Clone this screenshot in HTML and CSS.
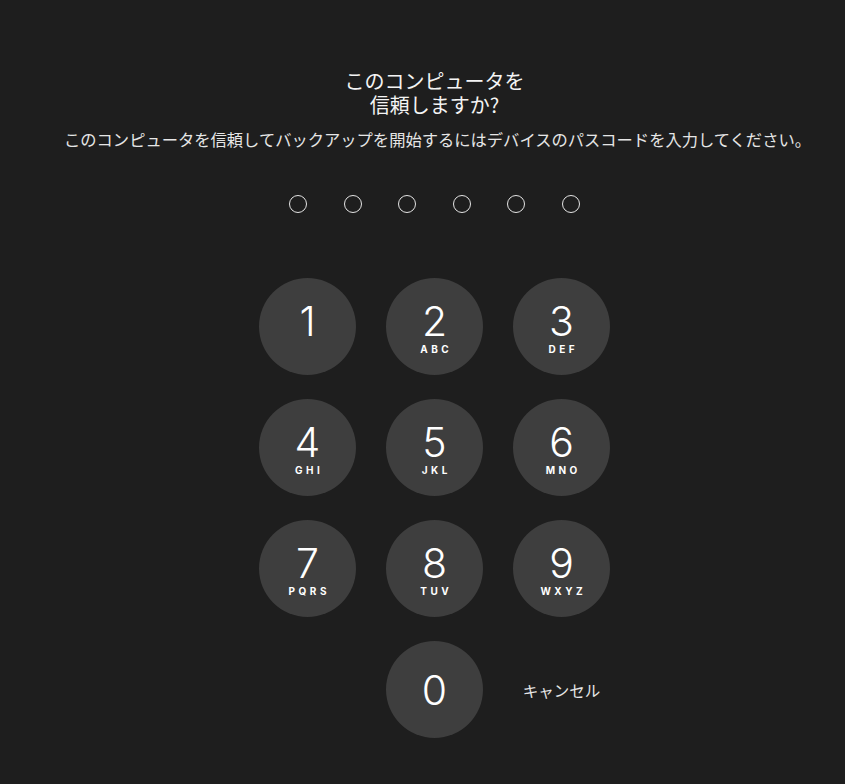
FILE: index.html
```html
<!DOCTYPE html>
<html lang="ja">
<head>
<meta charset="utf-8">
<link rel="stylesheet" href="styles.css">
</head>
<body>
<main class="page">
  <h1 class="title">このコンピュータを<br>信頼しますか?</h1>
  <p class="subtitle">このコンピュータを信頼してバックアップを開始するにはデバイスのパスコードを入力してください。</p>
  <div class="dots">
    <span class="dot"></span><span class="dot"></span><span class="dot"></span>
    <span class="dot"></span><span class="dot"></span><span class="dot"></span>
  </div>
  <div class="keypad">
    <div class="key"><span class="digit">1</span><span class="letters"></span></div>
    <div class="key"><span class="digit">2</span><span class="letters">ABC</span></div>
    <div class="key"><span class="digit">3</span><span class="letters">DEF</span></div>
    <div class="key"><span class="digit">4</span><span class="letters">GHI</span></div>
    <div class="key"><span class="digit">5</span><span class="letters">JKL</span></div>
    <div class="key"><span class="digit">6</span><span class="letters">MNO</span></div>
    <div class="key"><span class="digit">7</span><span class="letters">PQRS</span></div>
    <div class="key"><span class="digit">8</span><span class="letters">TUV</span></div>
    <div class="key"><span class="digit">9</span><span class="letters">WXYZ</span></div>
    <div class="key key-zero"><span class="digit">0</span></div>
    <div class="cancel">キャンセル</div>
  </div>
</main>
</body>
</html>
```
FILE: styles.css
```css
html, body {
  margin: 0;
  padding: 0;
  background: #1e1e1e;
}
body {
  width: 845px;
  height: 784px;
  overflow: hidden;
  font-family: "Noto Sans CJK JP", "Noto Sans", sans-serif;
  color: #f2f2f2;
}
.page {
  padding: 69px 0 0 24px;
  display: flex;
  flex-direction: column;
  align-items: center;
}
.title {
  margin: 0;
  font-size: 20px;
  line-height: 24px;
  font-weight: 400;
  text-align: center;
  color: #f4f4f4;
}
.subtitle {
  margin: 11px 0 0;
  padding-left: 6px;
  font-size: 16.3px;
  line-height: 22px;
  color: #e6e6e6;
  white-space: nowrap;
}
.dots {
  margin-top: 45px;
  display: flex;
  gap: 36.5px;
}
.dot {
  width: 16px;
  height: 16px;
  border: 1.6px solid #e4e4e4;
  border-radius: 50%;
}
.keypad {
  margin-top: 65px;
  display: grid;
  grid-template-columns: repeat(3, 97px);
  grid-auto-rows: 97px;
  column-gap: 30px;
  row-gap: 24px;
}
.key {
  width: 97px;
  height: 97px;
  border-radius: 50%;
  background: #3e3e3e;
  display: flex;
  flex-direction: column;
  align-items: center;
  justify-content: center;
  color: #ffffff;
}
.digit {
  font-family: Inter, "Liberation Sans", sans-serif;
  font-size: 41px;
  line-height: 44px;
  font-weight: 300;
}
.letters {
  font-family: Inter, "Liberation Sans", sans-serif;
  font-size: 10px;
  line-height: 12px;
  height: 12px;
  font-weight: 700;
  letter-spacing: 3.5px;
  padding-left: 3.5px;
}
.key-zero {
  grid-column: 2;
}
.cancel {
  display: flex;
  align-items: center;
  justify-content: center;
  font-size: 15.5px;
  color: #e6e6e6;
}
```
